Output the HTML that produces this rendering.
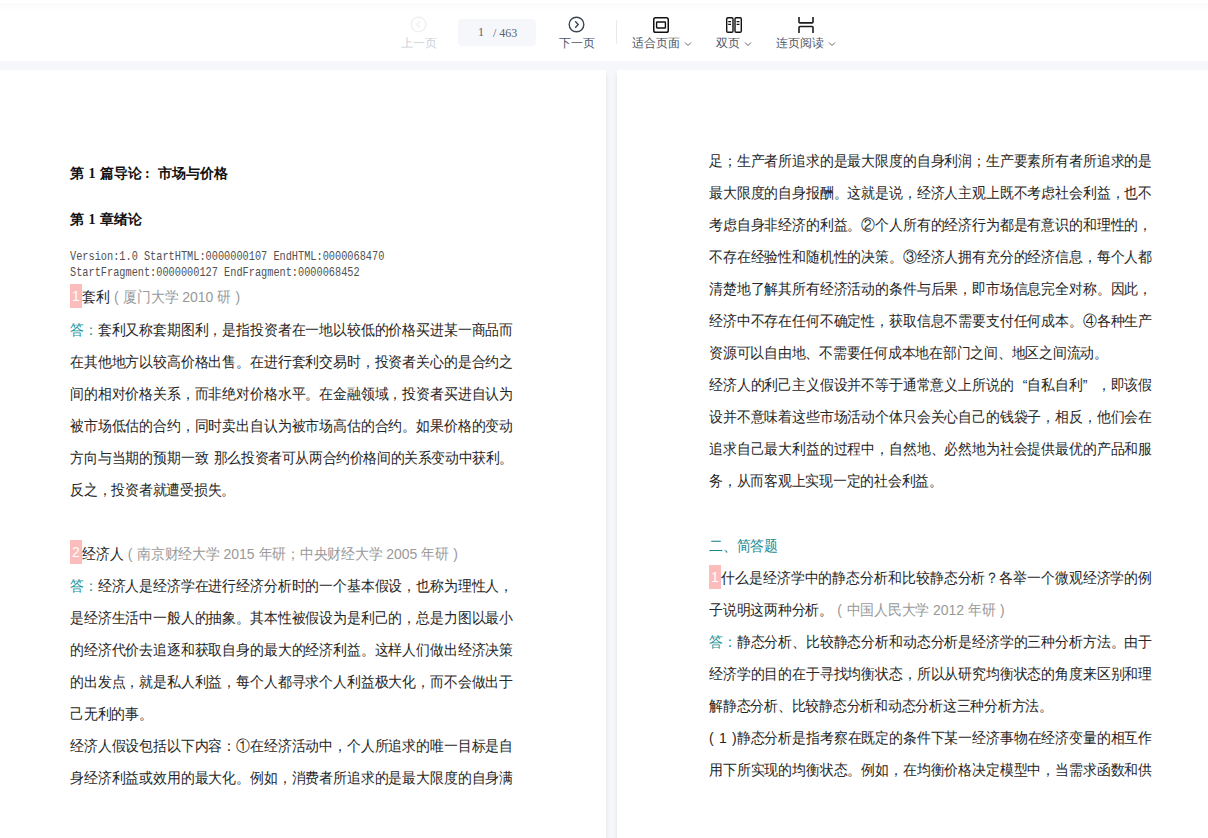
<!DOCTYPE html>
<html><head><meta charset="utf-8">
<style>
html,body{margin:0;padding:0;width:1208px;height:838px;overflow:hidden;background:#fff;font-family:"Liberation Sans",sans-serif;}
#tb{position:absolute;left:0;top:0;width:1208px;height:61px;background:#fff;}
#topline{position:absolute;left:0;top:3px;width:1208px;height:6px;background:linear-gradient(#fbfbfb 0,#fbfbfb 50%,#fdfdfd 50%,#fdfdfd 100%);}
#band{position:absolute;left:0;top:61px;width:1208px;height:777px;background:#f6f7fa;}
.page{position:absolute;top:70px;width:628px;height:900px;background:#fff;box-shadow:0 4px 4px rgba(0,0,0,0.09);}
.lbl{position:absolute;font-size:12px;line-height:12px;color:#4d5567;white-space:nowrap;}
.chev{position:absolute;}
.ln{position:absolute;transform-origin:0 13px;transform:scaleY(1.08);width:443px;font-size:14px;letter-spacing:-0.25px;line-height:16px;color:#262626;white-space:nowrap;text-align:justify;text-align-last:justify;}
.nj{text-align:left;text-align-last:left;}
.hd{position:absolute;font-family:"Liberation Serif",serif;font-weight:bold;font-size:14px;line-height:16px;color:#111;white-space:nowrap;word-spacing:1px;}
.hc{display:inline-block;width:15.8px;box-sizing:border-box;padding-left:3px;}
.mono{position:absolute;font-family:"Liberation Mono",monospace;font-size:13px;line-height:16px;color:#505050;white-space:nowrap;transform-origin:0 0;transform:scaleX(0.79);}
.ans{color:#1b939b;}
.g{color:#999;}
.bd{position:absolute;background:#fdbcbc;color:#fff;width:12px;height:24px;line-height:24px;text-align:center;font-size:14px;}
.sp{display:inline-block;width:12px;}
.n{letter-spacing:0;}
.ql{display:inline-block;width:13.85px;text-align:right;text-align-last:right;letter-spacing:0;}
.qr{display:inline-block;width:13.85px;text-align:left;text-align-last:left;letter-spacing:0;}
.fp{display:inline-block;width:13.85px;text-align:center;text-align-last:center;letter-spacing:0;}
</style></head><body>
<div id="band"></div>
<div class="page" style="left:-22px"></div>
<div class="page" style="left:617px"></div>
<div id="tb"></div>
<div id="topline"></div>

<!-- toolbar -->
<svg style="position:absolute;left:410px;top:16px" width="17" height="17" viewBox="0 0 17 17"><circle cx="8.5" cy="8.5" r="7.3" fill="none" stroke="#eceef1" stroke-width="1.2"/><path d="M9.8 5.3 L6.8 8.5 L9.8 11.7" fill="none" stroke="#eceef1" stroke-width="1.2"/></svg>
<div class="lbl" style="left:401px;top:37px;color:#cdd0d6">上一页</div>
<div style="position:absolute;left:458px;top:19px;width:78px;height:27px;background:#f5f7fa;border-radius:4px;"></div>
<div style="position:absolute;left:478px;top:25px;font-family:'Liberation Serif',serif;font-size:12px;line-height:14px;color:#5a6272">1</div>
<div style="position:absolute;left:493px;top:26px;font-family:'Liberation Serif',serif;font-size:12px;line-height:14px;color:#5a6272">/ 463</div>
<svg style="position:absolute;left:568px;top:16px" width="17" height="17" viewBox="0 0 17 17"><circle cx="8.5" cy="8.5" r="7.3" fill="none" stroke="#3c4454" stroke-width="1.4"/><path d="M7.2 5.3 L10.2 8.5 L7.2 11.7" fill="none" stroke="#3c4454" stroke-width="1.4"/></svg>
<div class="lbl" style="left:559px;top:37px">下一页</div>
<div style="position:absolute;left:616px;top:20px;width:1px;height:24px;background:#e8eaf0"></div>
<svg style="position:absolute;left:652px;top:16px" width="18" height="18" viewBox="0 0 18 18"><rect x="1.75" y="1.75" width="14.5" height="14.5" rx="1.8" fill="none" stroke="#111" stroke-width="1.5"/><rect x="4.6" y="6" width="8.8" height="6" rx="0.6" fill="none" stroke="#111" stroke-width="1.4"/></svg>
<div class="lbl" style="left:632px;top:37px">适合页面</div>
<svg class="chev" style="left:684px;top:41px" width="8" height="6" viewBox="0 0 8 6"><path d="M1 1.5 L4 4.5 L7 1.5" fill="none" stroke="#5a6272" stroke-width="1"/></svg>
<svg style="position:absolute;left:725px;top:16px" width="18" height="18" viewBox="0 0 18 18"><rect x="1.7" y="1.7" width="6.3" height="14.6" rx="1.2" fill="none" stroke="#111" stroke-width="1.4"/><rect x="10" y="1.7" width="6.3" height="14.6" rx="1.2" fill="none" stroke="#111" stroke-width="1.4"/><path d="M3.2 5.6h2.8M3.2 8.4h2.8M11.6 5.6h2.8M11.6 8.4h2.8" stroke="#111" stroke-width="1.1"/></svg>
<div class="lbl" style="left:716px;top:37px">双页</div>
<svg class="chev" style="left:744px;top:41px" width="8" height="6" viewBox="0 0 8 6"><path d="M1 1.5 L4 4.5 L7 1.5" fill="none" stroke="#5a6272" stroke-width="1"/></svg>
<svg style="position:absolute;left:797px;top:16px" width="18" height="18" viewBox="0 0 18 18"><path d="M2 1v4.9q0 1 1 1h12q1 0 1-1V1M2 17v-5.5q0-1 1-1h12q1 0 1 1V17" fill="none" stroke="#1c1c1c" stroke-width="1.6"/></svg>
<div class="lbl" style="left:776px;top:37px">连页阅读</div>
<svg class="chev" style="left:828px;top:41px" width="8" height="6" viewBox="0 0 8 6"><path d="M1 1.5 L4 4.5 L7 1.5" fill="none" stroke="#5a6272" stroke-width="1"/></svg>

<!-- left page -->
<div class="bd" style="left:70px;top:284px">1</div>
<div class="bd" style="left:70px;top:540px">2</div>
<div class="bd" style="left:709px;top:565px">1</div>
<div class="hd" style="left:70px;top:166px">第 1 篇导论<span class="hc">:</span>市场与价格</div>
<div class="hd" style="left:70px;top:212px">第 1 章绪论</div>
<div class="mono" style="left:70px;top:249px">Version:1.0 StartHTML:0000000107 EndHTML:0000068470</div>
<div class="mono" style="left:70px;top:265px">StartFragment:0000000127 EndFragment:0000068452</div>
<div class="ln nj" style="top:289px;left:70px"><span class="sp"></span>套利<span class="g"><span class="fp">(</span>厦门大学<span class="n"> 2010 </span>研<span class="fp">)</span></span></div>
<div class="ln" style="top:322px;left:70px"><span class="ans">答：</span>套利又称套期图利，是指投资者在一地以较低的价格买进某一商品而</div>
<div class="ln" style="top:354px;left:70px">在其他地方以较高价格出售。在进行套利交易时，投资者关心的是合约之</div>
<div class="ln" style="top:386px;left:70px">间的相对价格关系，而非绝对价格水平。在金融领域，投资者买进自认为</div>
<div class="ln" style="top:418px;left:70px">被市场低估的合约，同时卖出自认为被市场高估的合约。如果价格的变动</div>
<div class="ln nj" style="top:450px;left:70px"><span style="letter-spacing:-0.15px">方向与当期的预期一致</span><span style="display:inline-block;width:5.3px"></span><span style="letter-spacing:-0.4px">那么投资者可从两合约价格间的关系变动中获利。</span></div>
<div class="ln nj" style="top:482px;left:70px">反之，投资者就遭受损失。</div>
<div class="ln nj" style="top:546px;left:70px"><span class="sp"></span>经济人<span class="g"><span class="fp">(</span>南京财经大学<span class="n"> 2015 </span>年研；中央财经大学<span class="n"> 2005 </span>年研<span class="fp">)</span></span></div>
<div class="ln" style="top:578px;left:70px"><span class="ans">答：</span>经济人是经济学在进行经济分析时的一个基本假设，也称为理性人，</div>
<div class="ln" style="top:610px;left:70px">是经济生活中一般人的抽象。其本性被假设为是利己的，总是力图以最小</div>
<div class="ln" style="top:642px;left:70px">的经济代价去追逐和获取自身的最大的经济利益。这样人们做出经济决策</div>
<div class="ln" style="top:674px;left:70px">的出发点，就是私人利益，每个人都寻求个人利益极大化，而不会做出于</div>
<div class="ln nj" style="top:706px;left:70px">己无利的事。</div>
<div class="ln" style="top:738px;left:70px">经济人假设包括以下内容：①在经济活动中，个人所追求的唯一目标是自</div>
<div class="ln" style="top:770px;left:70px">身经济利益或效用的最大化。例如，消费者所追求的是最大限度的自身满</div>

<!-- right page -->
<div class="ln" style="top:153px;left:709px">足；生产者所追求的是最大限度的自身利润；生产要素所有者所追求的是</div>
<div class="ln" style="top:185px;left:709px">最大限度的自身报酬。这就是说，经济人主观上既不考虑社会利益，也不</div>
<div class="ln" style="top:217px;left:709px">考虑自身非经济的利益。②个人所有的经济行为都是有意识的和理性的，</div>
<div class="ln" style="top:249px;left:709px">不存在经验性和随机性的决策。③经济人拥有充分的经济信息，每个人都</div>
<div class="ln" style="top:281px;left:709px">清楚地了解其所有经济活动的条件与后果，即市场信息完全对称。因此，</div>
<div class="ln" style="top:313px;left:709px">经济中不存在任何不确定性，获取信息不需要支付任何成本。④各种生产</div>
<div class="ln nj" style="top:345px;left:709px">资源可以自由地、不需要任何成本地在部门之间、地区之间流动。</div>
<div class="ln" style="top:377px;left:709px">经济人的利己主义假设并不等于通常意义上所说的<span class="ql">“</span>自私自利<span class="qr">”</span>，即该假</div>
<div class="ln" style="top:409px;left:709px">设并不意味着这些市场活动个体只会关心自己的钱袋子，相反，他们会在</div>
<div class="ln" style="top:441px;left:709px">追求自己最大利益的过程中，自然地、必然地为社会提供最优的产品和服</div>
<div class="ln nj" style="top:473px;left:709px">务，从而客观上实现一定的社会利益。</div>
<div class="ln nj ans" style="top:538px;left:709px;color:#17888f">二、简答题</div>
<div class="ln" style="top:570px;left:709px"><span class="sp"></span>什么是经济学中的静态分析和比较静态分析？各举一个微观经济学的例</div>
<div class="ln nj" style="top:602px;left:709px">子说明这两种分析。<span class="g"><span class="fp">(</span>中国人民大学<span class="n"> 2012 </span>年研<span class="fp">)</span></span></div>
<div class="ln" style="top:634px;left:709px"><span class="ans">答：</span>静态分析、比较静态分析和动态分析是经济学的三种分析方法。由于</div>
<div class="ln" style="top:666px;left:709px">经济学的目的在于寻找均衡状态，所以从研究均衡状态的角度来区别和理</div>
<div class="ln nj" style="top:698px;left:709px">解静态分析、比较静态分析和动态分析这三种分析方法。</div>
<div class="ln" style="top:730px;left:709px"><span style="display:inline-block;width:27.7px;letter-spacing:0;text-align:justify;text-align-last:justify">( 1 )</span>静态分析是指考察在既定的条件下某一经济事物在经济变量的相互作</div>
<div class="ln" style="top:762px;left:709px">用下所实现的均衡状态。例如，在均衡价格决定模型中，当需求函数和供</div>
</body></html>
